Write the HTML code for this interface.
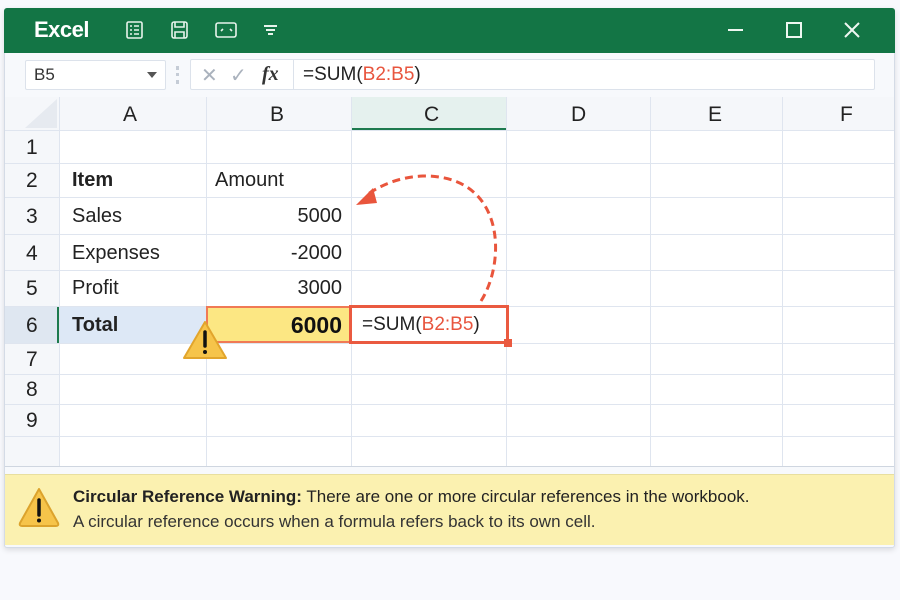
<!DOCTYPE html>
<html><head><meta charset="utf-8"><style>
*{margin:0;padding:0;box-sizing:border-box}
body{width:900px;height:600px;background:#f8f9fd;font-family:"Liberation Sans","DejaVu Sans",sans-serif;position:relative;overflow:hidden}
.a{position:absolute}
.win{left:4px;top:8px;width:891px;height:540px;background:#f7f9fc;border:1px solid #d4dbe6;border-radius:3px;box-shadow:0 2px 6px rgba(0,0,0,.12)}
.title{left:4px;top:8px;width:891px;height:45px;background:#137545;border-radius:3px 3px 0 0}
.hl{position:absolute;background:#dfe5ef}
.t{position:absolute;font-size:21px;color:#222}
</style></head><body>
<div class="a win"></div>
<div class="a title"></div>
<div class="a" style="left:34px;top:17px;color:#fff;font-size:22px;font-weight:bold;letter-spacing:-0.5px">Excel</div>
<svg class="a" style="left:120px;top:16px" width="170" height="30" fill="none" stroke="#e8f3ec" stroke-width="1.6">
<rect x="7" y="6" width="15" height="16" rx="1.5"/><path d="M10 10h2M14 10h5M10 14h2M14 14h5M10 18h2M14 18h5"/>
<rect x="52" y="6" width="15" height="16" rx="2"/><path d="M55 6v5h9V6M55 22v-6h9v6"/>
<rect x="96" y="7" width="20" height="14" rx="2"/><path d="M101 15l2-2M110 13l2 2"/>
<path d="M144 10h13M146 14h9M148 18h5" stroke-width="2"/>
</svg>
<svg class="a" style="left:720px;top:16px" width="150" height="30" fill="none" stroke="#eef7f1" stroke-width="2">
<path d="M8 14h15"/><rect x="67" y="7" width="14" height="14"/><path d="M125 7l14 14M139 7l-14 14"/>
</svg>
<div class="a" style="left:25px;top:60px;width:141px;height:30px;background:#fff;border:1px solid #dce2eb;border-radius:2px"></div>
<div class="a" style="left:34px;top:65px;font-size:17px;color:#333">B5</div>
<div class="a" style="left:147px;top:72px;width:0;height:0;border-left:5px solid transparent;border-right:5px solid transparent;border-top:6px solid #555"></div>
<div class="a" style="left:176px;top:66px;width:3px;height:18px;border-left:3px dotted #c5ccd6"></div>
<div class="a" style="left:190px;top:59px;width:685px;height:31px;background:#fff;border:1px solid #dce2eb;border-radius:2px"></div>
<div class="a" style="left:293px;top:59px;width:1px;height:31px;background:#dce2eb"></div>
<div class="a" style="left:201px;top:63px;font-size:20px;color:#aab2bd">✕</div>
<div class="a" style="left:230px;top:63px;font-size:20px;color:#aab2bd">✓</div>
<div class="a" style="left:262px;top:63px;font-size:20px;color:#333;font-family:'Liberation Serif',serif;font-style:italic;font-weight:bold">fx</div>
<div class="a" style="left:303px;top:64px;font-size:19px;color:#222">=SUM(<span style="color:#e8553e">B2:B5</span>)</div>
<div class="a" style="left:5px;top:97px;width:889px;height:369px;background:#fff"></div>
<div class="a" style="left:5px;top:97px;width:889px;height:33px;background:#f5f7fa"></div>
<div class="a" style="left:5px;top:97px;width:54px;height:369px;background:#f5f7fa"></div>
<div class="a" style="left:351px;top:97px;width:155px;height:33px;background:#e5f1ee;border-bottom:2px solid #1d7a4e"></div>
<div class="a" style="left:5px;top:306px;width:54px;height:37px;background:#dfe7f1"></div>
<div class="a" style="left:59px;top:306px;width:147px;height:37px;background:#dde8f6"></div>
<div class="a" style="left:57px;top:306px;width:3px;height:37px;background:#1d7a4e"></div>
<svg class="a" style="left:5px;top:97px" width="54" height="33"><path d="M20 31L52 2V31Z" fill="#e6eaf0"/></svg>
<div class="hl" style="left:5px;top:130px;width:889px;height:1px"></div>
<div class="hl" style="left:5px;top:163px;width:889px;height:1px"></div>
<div class="hl" style="left:5px;top:197px;width:889px;height:1px"></div>
<div class="hl" style="left:5px;top:234px;width:889px;height:1px"></div>
<div class="hl" style="left:5px;top:270px;width:889px;height:1px"></div>
<div class="hl" style="left:5px;top:306px;width:889px;height:1px"></div>
<div class="hl" style="left:5px;top:343px;width:889px;height:1px"></div>
<div class="hl" style="left:5px;top:374px;width:889px;height:1px"></div>
<div class="hl" style="left:5px;top:404px;width:889px;height:1px"></div>
<div class="hl" style="left:5px;top:436px;width:889px;height:1px"></div>
<div class="hl" style="left:5px;top:466px;width:889px;height:1px;background:#cfd6e0"></div>
<div class="hl" style="left:59px;top:97px;width:1px;height:369px"></div>
<div class="hl" style="left:206px;top:97px;width:1px;height:369px"></div>
<div class="hl" style="left:351px;top:97px;width:1px;height:369px"></div>
<div class="hl" style="left:506px;top:97px;width:1px;height:369px"></div>
<div class="hl" style="left:650px;top:97px;width:1px;height:369px"></div>
<div class="hl" style="left:782px;top:97px;width:1px;height:369px"></div>
<div class="t" style="left:123px;top:103px">A</div>
<div class="t" style="left:270px;top:103px">B</div>
<div class="t" style="left:424px;top:103px">C</div>
<div class="t" style="left:571px;top:103px">D</div>
<div class="t" style="left:708px;top:103px">E</div>
<div class="t" style="left:840px;top:103px">F</div>
<div class="t" style="left:26px;top:136px">1</div>
<div class="t" style="left:26px;top:169px">2</div>
<div class="t" style="left:26px;top:205px">3</div>
<div class="t" style="left:26px;top:242px">4</div>
<div class="t" style="left:26px;top:277px">5</div>
<div class="t" style="left:26px;top:314px">6</div>
<div class="t" style="left:26px;top:348px">7</div>
<div class="t" style="left:26px;top:378px">8</div>
<div class="t" style="left:26px;top:409px">9</div>
<div class="t" style="left:72px;top:169px;font-weight:bold;font-size:20px">Item</div>
<div class="t" style="left:215px;top:169px;font-size:20px">Amount</div>
<div class="t" style="left:72px;top:205px;font-size:20px">Sales</div>
<div class="t" style="left:72px;top:242px;font-size:20px">Expenses</div>
<div class="t" style="left:72px;top:277px;font-size:20px">Profit</div>
<div class="t" style="left:72px;top:314px;font-size:20px;font-weight:bold">Total</div>
<div class="t" style="left:206px;top:205px;width:136px;text-align:right;font-size:20px">5000</div>
<div class="t" style="left:206px;top:242px;width:136px;text-align:right;font-size:20px">-2000</div>
<div class="t" style="left:206px;top:277px;width:136px;text-align:right;font-size:20px">3000</div>
<div class="a" style="left:206px;top:306px;width:145px;height:37px;background:#fce783;border:2px solid #f07a55"></div>
<div class="t" style="left:206px;top:312px;width:136px;text-align:right;font-size:23px;font-weight:bold;color:#111">6000</div>
<div class="a" style="left:349px;top:305px;width:160px;height:39px;border:3px solid #ea5a40;background:#fff"></div>
<div class="a" style="left:504px;top:339px;width:8px;height:8px;background:#ea5a40"></div>
<div class="t" style="left:362px;top:314px;font-size:19px">=SUM(<span style="color:#e8553e">B2:B5</span>)</div>
<svg class="a" style="left:0;top:0" width="900" height="600">
<path d="M481 301C506 262 506 175 423 176C398 177 380 186 368 194" fill="none" stroke="#e9553c" stroke-width="3" stroke-dasharray="8 5"/>
<path d="M356 205L373 188L377 203Z" fill="#e9553c"/>
<path d="M205 322L226 358H184Z" fill="#f6c44a" stroke="#e2a52c" stroke-width="2" stroke-linejoin="round"/>
<path d="M205 332v14" stroke="#111" stroke-width="3.5" stroke-linecap="round"/><circle cx="205" cy="352" r="2" fill="#111"/>
</svg>
<div class="a" style="left:5px;top:474px;width:889px;height:71px;background:#fbf1b0;border-top:1px solid #e8df9f"></div>
<svg class="a" style="left:16px;top:486px" width="46" height="44">
<path d="M23 3L42 37Q43 40 40 40H6Q3 40 4 37Z" fill="#f6c44a" stroke="#dca32c" stroke-width="2" stroke-linejoin="round"/>
<path d="M23 14v15" stroke="#111" stroke-width="3.5" stroke-linecap="round"/><circle cx="23" cy="34.5" r="2" fill="#111"/>
</svg>
<div class="a" style="left:73px;top:487px;font-size:17px;color:#222"><b>Circular Reference Warning:</b> There are one or more circular references in the workbook.</div>
<div class="a" style="left:73px;top:512px;font-size:17px;color:#333">A circular reference occurs when a formula refers back to its own cell.</div>
</body></html>
